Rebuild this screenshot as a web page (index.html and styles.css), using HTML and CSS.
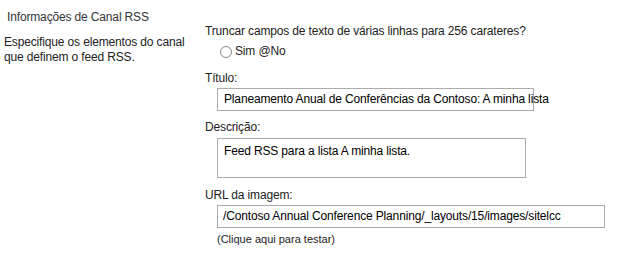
FILE: index.html
```html
<!DOCTYPE html>
<html>
<head>
  <meta charset="UTF-8">
  <title>Informações de Canal RSS</title>
  <link rel="stylesheet" href="styles.css">
</head>
<body>
  <div class="section">
    <div class="section-info">
      <h3 class="section-title">Informações de Canal RSS</h3>
      <p class="section-desc">Especifique os elementos do canal que definem o feed RSS.</p>
    </div>

    <div class="section-fields">
      <div class="field-label">Truncar campos de texto de várias linhas para 256 carateres?</div>
      <div class="radio-row">
        <span class="radio"></span>
        <span class="radio-text">Sim @No</span>
      </div>

      <div class="field-label label-title">Título:</div>
      <div class="text-box box-title">Planeamento Anual de Conferências da Contoso: A minha lista</div>

      <div class="field-label label-desc">Descrição:</div>
      <div class="text-box box-desc">Feed RSS para a lista A minha lista.</div>

      <div class="field-label label-url">URL da imagem:</div>
      <div class="text-box box-url">/Contoso Annual Conference Planning/_layouts/15/images/sitelcc</div>
      <div class="test-link">(Clique aqui para testar)</div>
    </div>
  </div>
</body>
</html>
```

FILE: styles.css
```css
/* Estilos base */
body {
  margin: 0;
  font-family: "Liberation Sans", Arial, sans-serif;
  font-size: 12px;
  line-height: 15px;
  letter-spacing: -0.15px;
  color: #222;
  background-color: #fff;
}

.section {
  display: flex;
}

/* Coluna da esquerda */
.section-info {
  width: 205px;
  flex-shrink: 0;
  padding-top: 10px;
  box-sizing: border-box;
}

.section-title {
  margin: 0 0 10px 7px;
  font-size: 12px;
  font-weight: normal;
  color: #333;
}

.section-desc {
  margin: 0 0 0 4px;
  width: 196px;
}

/* Coluna dos campos */
.section-fields {
  flex: 1;
  padding-top: 24px;
}

.radio-row {
  display: flex;
  align-items: center;
  margin: 5px 0 0 15px;
}

.radio {
  width: 10px;
  height: 10px;
  border: 1px solid #888;
  border-radius: 50%;
  margin-right: 3px;
}

.label-title {
  margin-top: 12px;
}

.label-desc {
  margin-top: 9px;
}

.label-url {
  margin-top: 10px;
}

.text-box {
  margin-left: 12px;
  border: 1px solid #ababab;
  padding-left: 6px;
  white-space: nowrap;
  box-sizing: border-box;
  color: #000;
}

.box-title {
  width: 317px;
  height: 23px;
  line-height: 21px;
  margin-top: 2px;
}

.box-desc {
  width: 309px;
  height: 40px;
  margin-top: 3px;
  padding-top: 5px;
}

.box-url {
  width: 388px;
  height: 23px;
  line-height: 21px;
  margin-top: 2px;
  padding-left: 5px;
}

.test-link {
  margin: 5px 0 0 12px;
  font-size: 11px;
  line-height: 13px;
  letter-spacing: 0;
}
```
